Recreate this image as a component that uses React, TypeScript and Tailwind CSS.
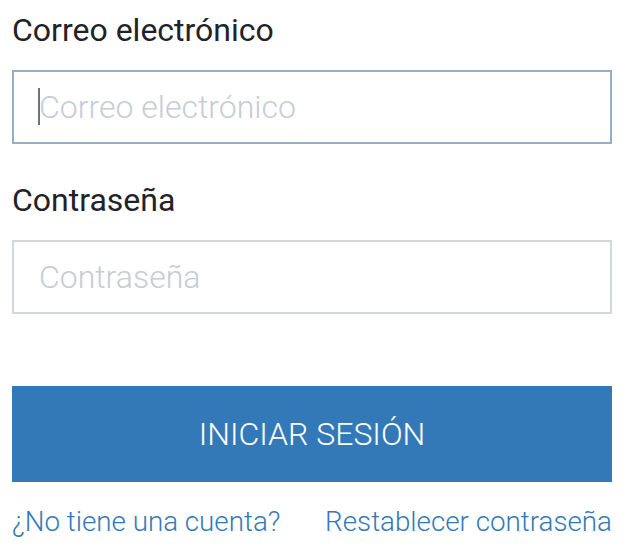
import React from "react";

export default function App() {
  return (
    <div className="w-[628px] h-[558px] bg-white px-3 pt-3 font-['Roboto',sans-serif] overflow-hidden">
      <label className="block text-[32px] leading-[36px] text-[#1f2328]">Correo electrónico</label>
      <div className="relative mt-[22px]">
        <input
          type="email"
          placeholder="Correo electrónico"
          className="block w-[600px] h-[74px] border-2 border-[#90b0cc] bg-white pl-[25px] text-[32px] font-light text-[#1f2328] placeholder:text-[#c7ccd4] outline-none"
        />
        <span className="absolute left-[26px] top-[18px] w-[2px] h-[37px] bg-[#6b7280]" />
      </div>
      <label className="block mt-[38px] text-[32px] leading-[36px] text-[#1f2328]">Contraseña</label>
      <input
        type="password"
        placeholder="Contraseña"
        className="block mt-[22px] w-[600px] h-[74px] border-2 border-[#d3d6db] bg-white pl-[25px] text-[32px] font-light text-[#1f2328] placeholder:text-[#c7ccd4] outline-none"
      />
      <button className="block mt-[72px] w-[600px] h-[96px] bg-[#3479b7] text-white text-[32px] font-light">
        INICIAR SESIÓN
      </button>
      <div className="flex justify-between w-[600px] mt-[24px] text-[27.75px] font-light leading-[32px] text-[#3479b7]">
        <a href="#">¿No tiene una cuenta?</a>
        <a href="#">Restablecer contraseña</a>
      </div>
    </div>
  );
}
